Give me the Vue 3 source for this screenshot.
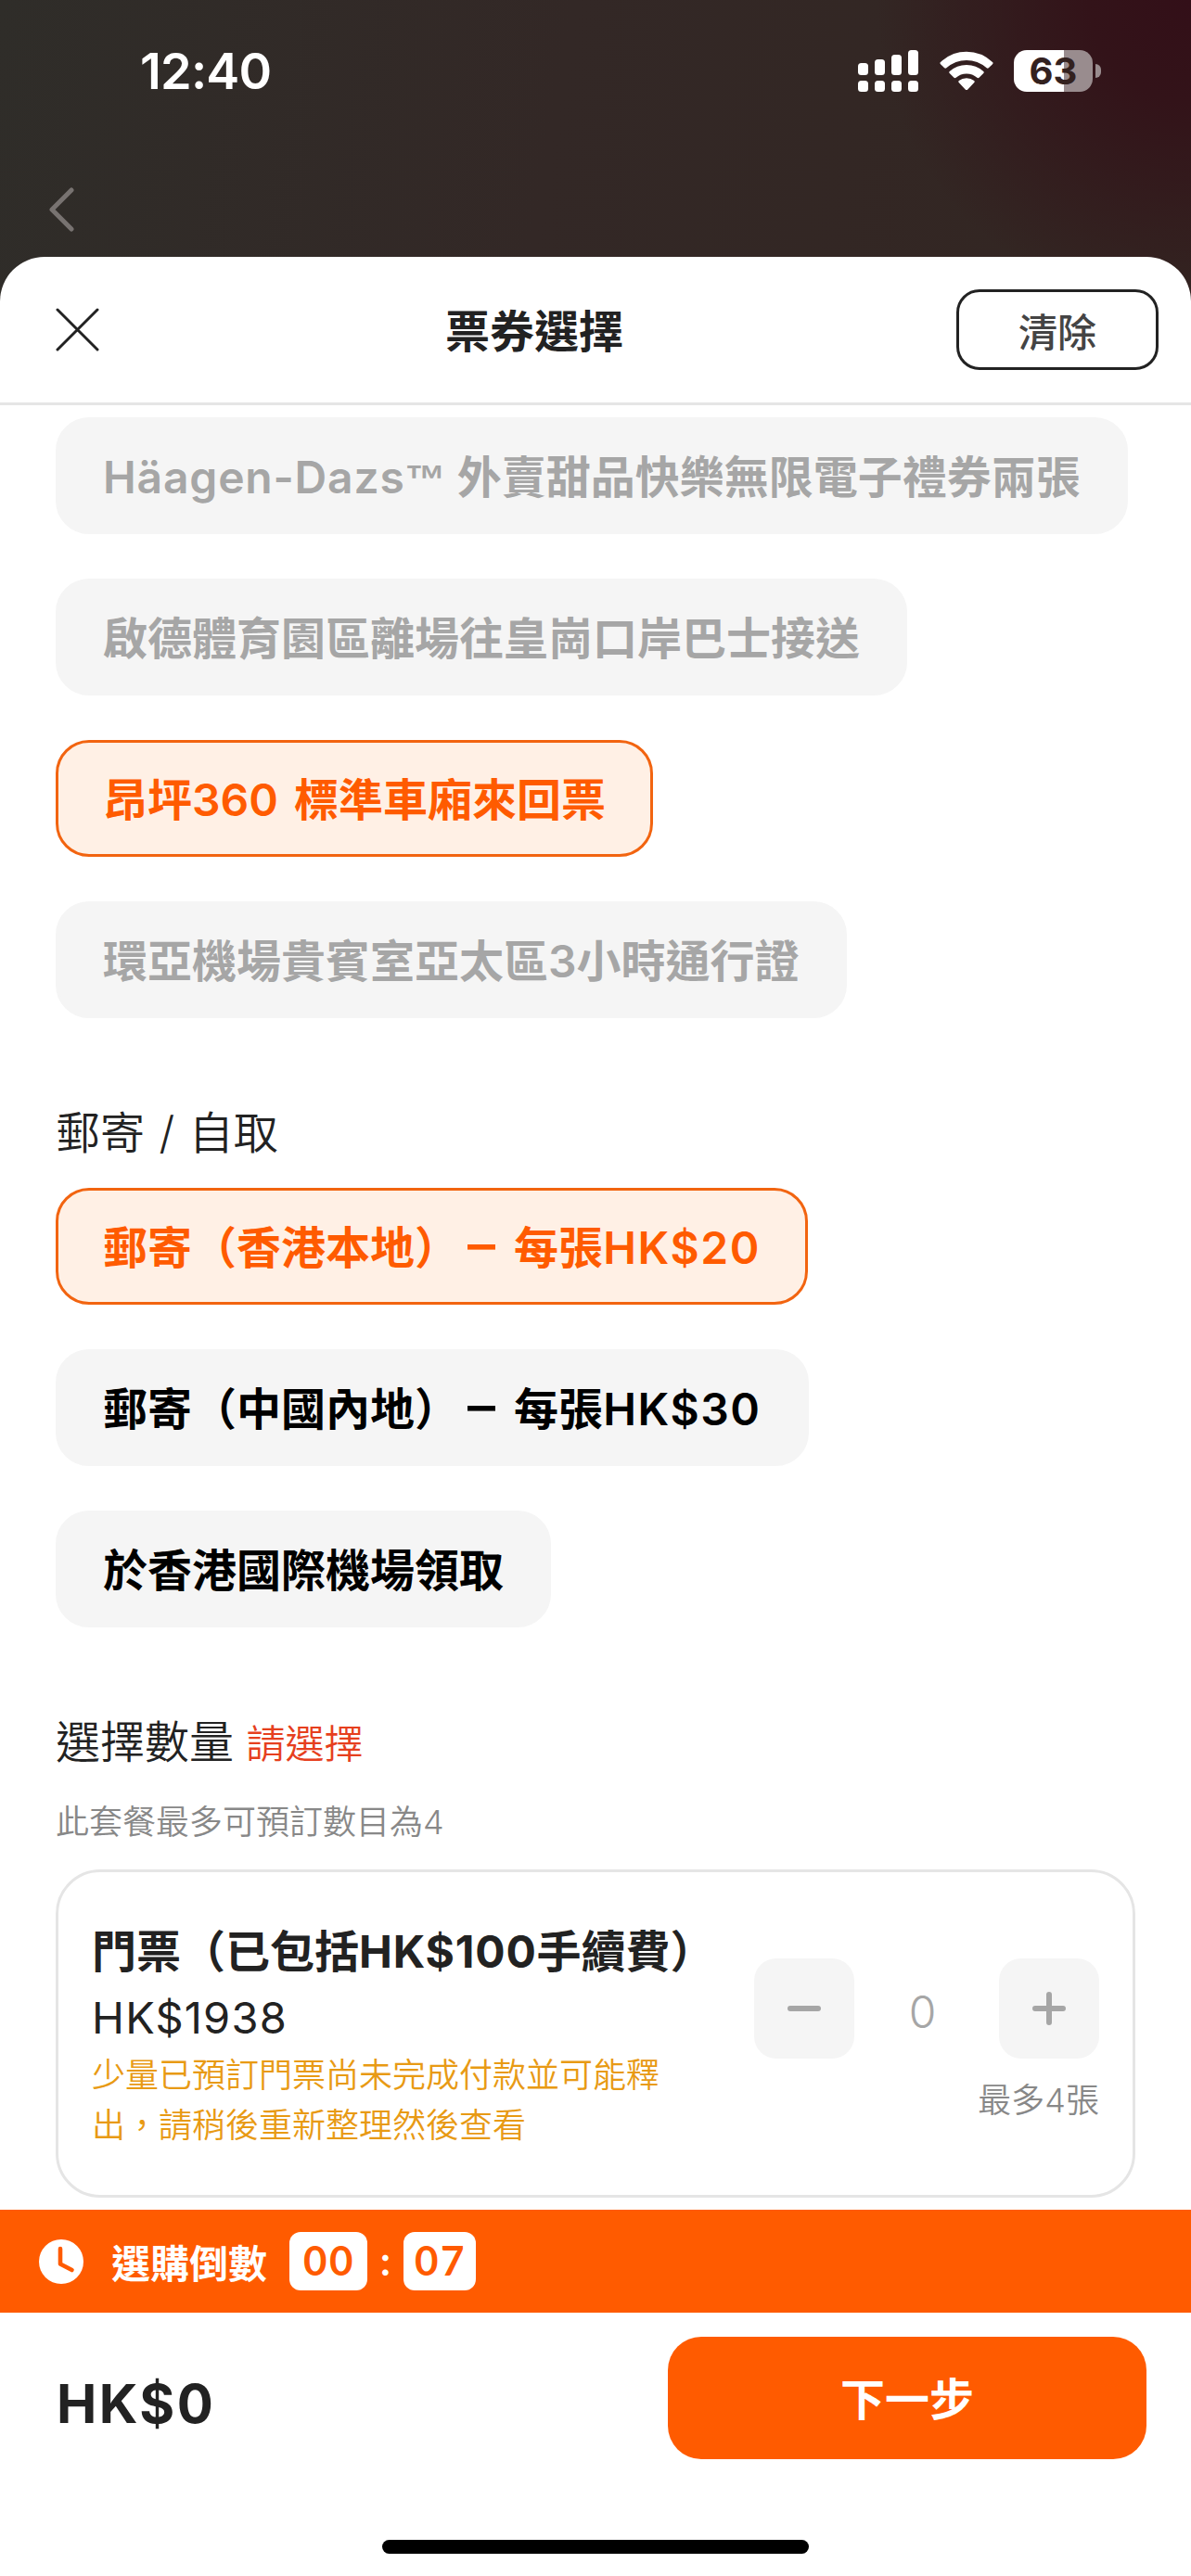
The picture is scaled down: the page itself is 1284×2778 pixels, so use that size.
<script setup>
    import { ref } from 'vue'

    // 套餐選項
    const packages=ref([
        {name:'Häagen-Dazs™ 外賣甜品快樂無限電子禮券兩張',state:'disabled'},
        {name:'啟德體育園區離場往皇崗口岸巴士接送',state:'disabled'},
        {name:'昂坪360 標準車廂來回票',state:'active'},
        {name:'環亞機場貴賓室亞太區3小時通行證',state:'disabled'}
    ])

    // 取票方式
    const deliveries=ref([
        {name:'郵寄（香港本地） – 每張HK$20',state:'active'},
        {name:'郵寄（中國內地） – 每張HK$30',state:''},
        {name:'於香港國際機場領取',state:''}
    ])

    const count=ref(0)
    const minute=ref('00')
    const second=ref('07')

    function choose(list,item){
        if(item.state==='disabled') return
        list.forEach(i => {
            if(i.state==='active') i.state=''
        })
        item.state='active'
    }

    // 把英文、破折號跟中文分開，方便調整字距
    function split(name){
        return name.split(/([A-Z][^\u4e00-\u9fff ™]*|™ | –)/).filter(t => t!=='')
    }

    function partClass(text){
        if(text===' –') return 'dash'
        if(text==='™ ') return 'tm'
        if(text.startsWith('HK')) return 'money'
        return /^[A-Z]/.test(text) ? 'latin' : ''
    }
</script>

<template>
    <div class="page">
        <div class="status">
            <span class="time">12:40</span>
            <div class="status-icons">
                <svg class="signal" width="65" height="45" viewBox="0 0 65 45" fill="#fff">
                    <rect x="0" y="14" width="11" height="13" rx="3.5"/>
                    <rect x="18" y="10" width="11" height="17" rx="3.5"/>
                    <rect x="36" y="5" width="11" height="22" rx="3.5"/>
                    <rect x="54" y="0" width="11" height="27" rx="3.5"/>
                    <rect x="0" y="33" width="11" height="12" rx="3.5"/>
                    <rect x="18" y="33" width="11" height="12" rx="3.5"/>
                    <rect x="36" y="33" width="11" height="12" rx="3.5"/>
                    <rect x="54" y="33" width="11" height="12" rx="3.5"/>
                </svg>
                <svg class="wifi" width="58" height="43" viewBox="0 0 58 43" fill="#fff">
                    <path d="M1 12Q13 .8 29 .8T57 12Q58.200 13 57 14.200L52.800 18.300Q51.800 19.200 50.700 18.300Q41 10.100 29 10.100T7.300 18.300Q6.200 19.200 5.200 18.300L1 14.200Q-.2 13 1 12Z"/>
                    <path d="M10.700 22Q18.500 15 29 15T47.300 22Q48.400 23 47.300 24.100L42.500 28.700Q41.500 29.600 40.400 28.700Q35.500 24.400 29 24.400T17.600 28.700Q16.500 29.600 15.500 28.700L10.700 24.100Q9.600 23 10.700 22Z"/>
                    <path d="M20.800 31.900Q24.300 29.300 29 29.300T37.200 31.900Q38.400 32.800 37.300 33.900L30.300 41.400Q29 42.700 27.700 41.400L20.700 33.900Q19.600 32.800 20.800 31.900Z"/>
                </svg>
                <div class="battery">63</div>
                <div class="battery-cap"></div>
            </div>
        </div>
        <div class="nav">
            <svg width="28" height="48" viewBox="0 0 28 48" fill="none" stroke="#787371" stroke-width="5" stroke-linecap="round" stroke-linejoin="round">
                <path d="M25 3L4 24L25 45"/>
            </svg>
        </div>

        <div class="sheet">
            <div class="head">
                <svg class="close" width="47" height="47" viewBox="0 0 47 47" stroke="#222" stroke-width="3" stroke-linecap="round">
                    <path d="M2 2L45 45M45 2L2 45"/>
                </svg>
                <h1>票券選擇</h1>
                <button class="clear">清除</button>
            </div>

            <div class="content">
                <div class="options">
                    <button v-for="item in packages" :key="item.name" class="option" :class="item.state" @click="choose(packages,item)"><span v-for="(text,i) in split(item.name)" :key="i" :class="partClass(text)">{{ text }}</span></button>
                </div>

                <h2>郵寄 / 自取</h2>
                <div class="options">
                    <button v-for="item in deliveries" :key="item.name" class="option" :class="item.state" @click="choose(deliveries,item)"><span v-for="(text,i) in split(item.name)" :key="i" :class="partClass(text)">{{ text }}</span></button>
                </div>

                <h2 class="amount">選擇數量 <span>請選擇</span></h2>
                <p class="hint">此套餐最多可預訂數目為4</p>

                <div class="card">
                    <div class="info">
                        <h3>門票（已包括<span>HK$100</span>手續費）</h3>
                        <p class="price">HK$1938</p>
                        <p class="warn">少量已預訂門票尚未完成付款並可能釋出，請稍後重新整理然後查看</p>
                    </div>
                    <div class="side">
                        <div class="stepper">
                            <button>
                                <svg width="36" height="36" viewBox="0 0 36 36" stroke="#a6a6a6" stroke-width="6" stroke-linecap="round">
                                    <path d="M3 18H33"/>
                                </svg>
                            </button>
                            <span>{{ count }}</span>
                            <button>
                                <svg width="36" height="36" viewBox="0 0 36 36" stroke="#a6a6a6" stroke-width="6" stroke-linecap="round">
                                    <path d="M3 18H33M18 3V33"/>
                                </svg>
                            </button>
                        </div>
                        <p class="max">最多4張</p>
                    </div>
                </div>
            </div>

            <div class="timer">
                <svg width="48" height="48" viewBox="0 0 48 48">
                    <circle cx="24" cy="24" r="24" fill="#fff"/>
                    <path d="M23 10V26.500L35.500 33" fill="none" stroke="#ff5b00" stroke-width="4.600" stroke-linecap="round" stroke-linejoin="round"/>
                </svg>
                <span class="label">選購倒數</span>
                <span class="num">{{ minute }}</span>
                <span class="colon">:</span>
                <span class="num last">{{ second }}</span>
            </div>

            <div class="foot">
                <span class="total">HK$0</span>
                <button class="next">下一步</button>
            </div>
            <div class="home"></div>
        </div>
    </div>
</template>

<style>
    body{
        margin: 0;
        background-color: #fff;
    }
</style>

<style scoped>
    .page{
        box-sizing: border-box;
        width: 1284px;
        height: 2778px;
        overflow: hidden;
        display: flex;
        flex-direction: column;
        font-family: Inter, "Noto Sans CJK TC", sans-serif;
        color: #222;
        background: radial-gradient(circle at 1284px 0, #330f18 0, #331319 110px, rgba(51,30,30,0) 340px), linear-gradient(100deg, #2f2d29 0, #332826 35%, #33241f 100%);
    }
    h1,h2,h3,p{
        margin: 0;
    }
    button{
        border: 0;
        padding: 0;
        font-family: inherit;
        color: inherit;
    }
    svg{
        display: block;
        flex: none;
    }
    /* 狀態列 */
    .status{
        box-sizing: border-box;
        height: 152px;
        padding: 0 97px 0 151px;
        display: flex;
        align-items: center;
        justify-content: space-between;
    }
    .time{
        font-size: 54px;
        font-weight: 600;
        color: #fff;
        line-height: 60px;
        letter-spacing: -0.8px;
        padding-top: 2px;
    }
    .status-icons{
        display: flex;
        align-items: center;
    }
    .wifi{
        margin: 0 22px 0 23px;
    }
    .battery{
        width: 85px;
        height: 45px;
        border-radius: 14px;
        background: linear-gradient(90deg, #fff 54px, #998c8e 54px);
        color: #33211f;
        font-size: 40px;
        font-weight: 700;
        line-height: 46px;
        text-align: center;
    }
    .battery-cap{
        width: 6px;
        height: 15px;
        margin-left: 3px;
        border-radius: 0 6px 6px 0;
        background-color: #998c8e;
    }
    .nav{
        height: 125px;
        padding: 50px 0 0 52px;
        box-sizing: border-box;
    }
    /* 彈層 */
    .sheet{
        flex: 1;
        display: flex;
        flex-direction: column;
        border-radius: 48px 48px 0 0;
        background-color: #fff;
    }
    .head{
        box-sizing: border-box;
        height: 160px;
        padding: 0 35px 0 60px;
        border-bottom: 3px solid #e5e5e5;
        display: grid;
        grid-template-columns: 218px 1fr 218px;
        align-items: center;
    }
    h1{
        font-size: 48px;
        line-height: 60px;
        font-weight: 700;
        text-align: center;
        padding: 4px 157px 0 0;
    }
    .clear{
        box-sizing: border-box;
        height: 87px;
        border: 3px solid #222;
        border-radius: 25px;
        background-color: #fff;
        font-size: 42px;
        font-weight: 500;
        color: #444;
    }
    .content{
        box-sizing: border-box;
        height: 1946px;
        padding: 13px 60px 0 60px;
    }
    .options{
        display: flex;
        flex-direction: column;
        align-items: flex-start;
        gap: 48px;
    }
    .option{
        box-sizing: border-box;
        height: 126px;
        padding: 4px 48px 0 48px;
        border: 3px solid #f5f5f5;
        border-radius: 36px;
        background-color: #f5f5f5;
        color: #000;
        font-size: 48px;
        line-height: 60px;
        font-weight: 600;
        white-space: pre;
        word-spacing: 5px;
    }
    .option.active{
        border-color: #f26410;
        background-color: #fff0e5;
        color: #ff5b00;
    }
    .option.disabled{
        color: #a6a6a6;
    }
    .latin{
        letter-spacing: 0.8px;
    }
    .money{
        letter-spacing: 1.6px;
    }
    .tm{
        font-family: "Liberation Sans", sans-serif;
        font-size: 44px;
        line-height: 0;
        word-spacing: 0;
    }
    .dash{
        font-size: 60px;
        line-height: 0;
        font-weight: 500;
        word-spacing: -7px;
        margin-right: 3px;
    }
    h2{
        font-size: 48px;
        line-height: 72px;
        font-weight: 350;
        word-spacing: 2px;
        margin-top: 88px;
        margin-bottom: 23px;
    }
    .amount{
        word-spacing: 0;
        margin-bottom: 21px;
    }
    .amount span{
        font-size: 42px;
        color: #e63f1e;
    }
    .hint{
        font-size: 36px;
        line-height: 54px;
        font-weight: 350;
        color: #888;
        margin-bottom: 24px;
    }
    .card{
        box-sizing: border-box;
        height: 354px;
        padding: 50px 36px 0 36px;
        border: 3px solid #e5e5e5;
        border-radius: 48px;
        display: flex;
        justify-content: space-between;
    }
    .info{
        width: 660px;
    }
    h3{
        font-size: 48px;
        line-height: 72px;
        font-weight: 700;
        white-space: nowrap;
    }
    h3 span{
        letter-spacing: 0.8px;
    }
    .price{
        font-size: 47px;
        line-height: 70px;
        font-weight: 400;
        letter-spacing: 1.2px;
    }
    .warn{
        width: 620px;
        font-size: 36px;
        line-height: 54px;
        font-weight: 350;
        color: #e89a14;
    }
    .side{
        width: 372px;
        padding-top: 43px;
    }
    .stepper{
        display: flex;
        align-items: center;
        justify-content: space-between;
    }
    .stepper button{
        width: 108px;
        height: 108px;
        border-radius: 24px;
        background-color: #f5f5f5;
        display: flex;
        align-items: center;
        justify-content: center;
    }
    .stepper span{
        font-size: 48px;
        font-weight: 300;
        color: #a6a6a6;
        padding-top: 6px;
        padding-right: 9px;
    }
    .max{
        margin-top: 18px;
        font-size: 36px;
        line-height: 54px;
        font-weight: 350;
        color: #888;
        text-align: right;
    }
    /* 倒數 */
    .timer{
        height: 111px;
        padding-left: 42px;
        display: flex;
        align-items: center;
        background-color: #ff5b00;
        color: #fff;
    }
    .label{
        margin: 0 24px 0 30px;
        font-size: 42px;
        font-weight: 600;
    }
    .num{
        width: 84px;
        height: 63px;
        border-radius: 12px;
        background-color: #fff;
        color: #ff5b00;
        font-family: Lato, sans-serif;
        font-size: 44px;
        font-weight: 700;
        line-height: 61px;
        letter-spacing: 2.5px;
        text-indent: 2px;
        text-align: center;
    }
    .last{
        width: 78px;
    }
    .colon{
        width: 39px;
        font-size: 42px;
        font-weight: 600;
        text-align: center;
    }
    .foot{
        height: 245px;
        display: flex;
        justify-content: space-between;
        padding: 26px 48px 0 61px;
        box-sizing: border-box;
    }
    .total{
        font-size: 58px;
        line-height: 144px;
        font-weight: 700;
        letter-spacing: 2.4px;
    }
    .next{
        width: 516px;
        height: 132px;
        padding-bottom: 4px;
        border-radius: 36px;
        background-color: #ff5b00;
        color: #fff;
        font-size: 48px;
        font-weight: 600;
    }
    .home{
        width: 460px;
        height: 15px;
        margin: 0 auto;
        border-radius: 8px;
        background-color: #000;
    }
</style>
